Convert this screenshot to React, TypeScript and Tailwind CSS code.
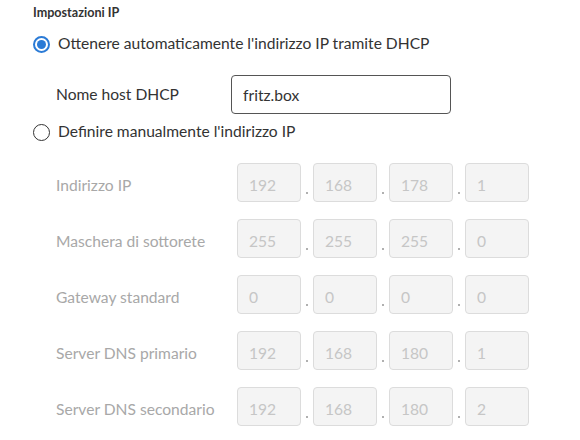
import React from "react";

const FONT = "font-['Lato','Liberation_Sans',sans-serif]";

const IP_ROWS: { label: string; parts: string[] }[] = [
  { label: "Indirizzo IP", parts: ["192", "168", "178", "1"] },
  { label: "Maschera di sottorete", parts: ["255", "255", "255", "0"] },
  { label: "Gateway standard", parts: ["0", "0", "0", "0"] },
  { label: "Server DNS primario", parts: ["192", "168", "180", "1"] },
  { label: "Server DNS secondario", parts: ["192", "168", "180", "2"] },
];

function Radio({ checked, label }: { checked: boolean; label: string }) {
  return (
    <label className="flex h-6 items-center gap-[8px] text-[15.6px] text-[#333]">
      {checked ? (
        <span className="flex h-[17px] w-[17px] items-center justify-center rounded-full border-2 border-[#2b7bd6]">
          <span className="h-[9px] w-[9px] rounded-full bg-[#2b7bd6]" />
        </span>
      ) : (
        <span className="h-[17px] w-[17px] rounded-full border-[1.5px] border-[#333]" />
      )}
      {label}
    </label>
  );
}

export default function App() {
  return (
    <div className={`h-[440px] w-[580px] bg-white pl-[33px] ${FONT}`}>
      <h2 className="flex h-[26px] items-center text-[12.6px] font-bold text-[#333]">
        Impostazioni IP
      </h2>

      <div className="mt-[6px]">
        <Radio checked label="Ottenere automaticamente l'indirizzo IP tramite DHCP" />
      </div>

      <div className="mt-[19px] flex h-[39px] items-center pl-[23px]">
        <span className="w-[175px] text-[15.6px] text-[#333]">Nome host DHCP</span>
        <input
          defaultValue="fritz.box"
          className="h-[39px] w-[220px] rounded-[4px] border border-[#555] px-[11px] text-[15.6px] text-[#333] outline-none"
        />
      </div>

      <div className="mt-[6px]">
        <Radio checked={false} label="Definire manualmente l'indirizzo IP" />
      </div>

      <div className="mt-[19px] flex flex-col gap-[17px] pl-[23px]">
        {IP_ROWS.map((row) => (
          <div key={row.label} className="flex h-[39px] items-center">
            <span className="w-[181px] pt-[6px] text-[15.6px] text-[#a8a8a8]">{row.label}</span>
            {row.parts.map((p, i) => (
              <React.Fragment key={i}>
                {i > 0 && (
                  <span className="flex h-full w-[12px] items-end justify-center pb-[8px]">
                    <span className="h-[2px] w-[2px] bg-[#b0b0b0]" />
                  </span>
                )}
                <span className="flex h-[39px] w-[64px] items-center rounded-[4px] border border-[#dcdcdc] bg-[#f4f4f4] px-[11px] pt-[6px] text-[15.6px] text-[#c6c6c6]">
                  {p}
                </span>
              </React.Fragment>
            ))}
          </div>
        ))}
      </div>
    </div>
  );
}
